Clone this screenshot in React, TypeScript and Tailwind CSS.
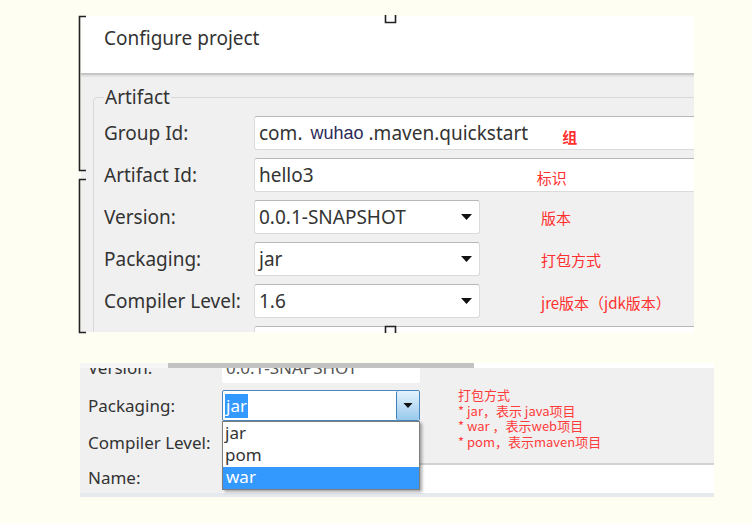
import React from 'react';

const ui = "font-['Noto_Sans','Noto_Sans_CJK_SC',sans-serif]";
const cjk = "font-['Noto_Sans_CJK_SC','Noto_Sans',sans-serif]";

const Caret = ({ w = 11, h = 6 }: { w?: number; h?: number }) => (
    <svg width={w} height={h} viewBox="0 0 11 6">
        <path d="M0 0h11L5.5 6z" fill="#111" />
    </svg>
);

const Note: React.FC<{ children: React.ReactNode; className?: string }> = ({ children, className = '' }) => (
    <span className={`${cjk} text-[15px] leading-none text-[#ff2f2f] ${className}`}>{children}</span>
);

const FormRow: React.FC<{ label: string; children: React.ReactNode }> = ({ label, children }) => (
    <div className="flex h-[34px] items-center">
        <div className="w-[150px] shrink-0 text-[19px] text-[#333]">{label}</div>
        {children}
    </div>
);

const Field: React.FC<{ children?: React.ReactNode; className?: string }> = ({ children, className = '' }) => (
    <div className={`flex h-[34px] items-center rounded-[3px] border border-[#dadada] border-t-[#b8b8b8] bg-white pl-[4px] text-[19px] text-[#333] ${className}`}>
        {children}
    </div>
);

const Select: React.FC<{ value: string }> = ({ value }) => (
    <Field className="w-[226px] shrink-0 justify-between pr-[7px]">
        <span>{value}</span>
        <Caret />
    </Field>
);

// the brackets and handles left on the page by the editor's image selection
const Handles = () => (
    <svg className="pointer-events-none absolute left-0 top-0" width="752" height="524">
        <g fill="none" stroke="#222" strokeWidth="1.6">
            <path d="M86 16.5H79.5V170.5H86" />
            <path d="M86 179.5H79.5V332.5H86" />
            <path d="M385.5 15V22.5H395.5V15" />
            <path d="M385.5 333V326.5H395.5V333" />
        </g>
    </svg>
);

const ConfigureProject = () => (
    <div className={`${ui} ml-[81px] h-[316px] w-[613px] overflow-hidden bg-[#f0f0f0]`}>
        <div className="flex h-[57px] items-start bg-white pl-[23px] pt-[8px] text-[19px] text-[#333]">Configure project</div>
        <div className="h-[2px] bg-[#c6c6c6]" />
        <div className="h-[2px] bg-[#e2e2e2]" />
        <fieldset className="ml-[12px] mt-[9px] w-[640px] rounded-[4px] border border-[#d8d8d8] pb-2 pl-[10px]">
            <legend className="px-[1px] text-[19px] leading-[22px] text-[#333]">Artifact</legend>
            <div className="mt-[8px] flex flex-col gap-[8px]">
                <FormRow label="Group Id:">
                    <Field className="flex-1">
                        <span>com.</span>
                        <span className="ml-[8px] text-[18px] text-[#2d2a5a] font-['Liberation_Sans',sans-serif]">wuhao</span>
                        <span className="ml-[5px]">.maven.quickstart</span>
                        <Note className="ml-[34px] mt-[6px] font-bold">组</Note>
                    </Field>
                </FormRow>
                <FormRow label="Artifact Id:">
                    <Field className="flex-1">
                        <span>hello3</span>
                        <Note className="ml-[223px] mt-[4px]">标识</Note>
                    </Field>
                </FormRow>
                <FormRow label="Version:">
                    <Select value="0.0.1-SNAPSHOT" />
                    <Note className="ml-[61px]">版本</Note>
                </FormRow>
                <FormRow label="Packaging:">
                    <Select value="jar" />
                    <Note className="ml-[61px]">打包方式</Note>
                </FormRow>
                <FormRow label="Compiler Level:">
                    <Select value="1.6" />
                    <Note className="ml-[61px] mt-[2px]">jre版本（jdk版本）</Note>
                </FormRow>
                <FormRow label="">
                    <Field className="flex-1 border-[#8fa9c4] border-t-[#7d9bbb]" />
                </FormRow>
            </div>
        </fieldset>
    </div>
);

const PackagingDropdown = () => (
    <div className={`${ui} ml-[80px] mt-[31px] flex h-[134px] w-[634px] flex-col overflow-hidden bg-[#f0f0f0] text-[17px] text-[#333]`}>
        <div className="flex h-[5px] shrink-0">
            <div className="w-[88px] bg-[#f6f6f6]" />
            <div className="w-[306px] bg-[#c3c3c3]" />
            <div className="flex-1 bg-white" />
        </div>
        <div className="flex h-[95px] shrink-0">
            <div className="flex w-[340px] flex-col">
                <div className="flex h-[15px] overflow-hidden">
                    <div className="-mt-[13px] w-[142px] pl-[8px] leading-[26px]">Version:</div>
                    <div className="-mt-[13px] h-[28px] w-[198px] rounded-[2px] bg-white pl-[4px] leading-[26px] text-[#555]">0.0.1-SNAPSHOT</div>
                </div>
                <div className="relative mt-[7px] flex h-[31px] items-center">
                    <div className="w-[142px] pl-[8px]">Packaging:</div>
                    <div className="flex h-[31px] w-[198px] items-stretch rounded-[2px] border border-[#4a86be] bg-white">
                        <div className="flex flex-1 items-center pl-[2px]">
                            <span className="bg-[#3399ff] px-[1px] leading-[24px] text-white">jar</span>
                        </div>
                        <div className="flex w-[23px] items-center justify-center rounded-[2px] border-l border-[#3f7fb5] bg-gradient-to-b from-[#e4f3fd] to-[#98c9ec]">
                            <Caret w={10} h={5} />
                        </div>
                    </div>
                    <div className="absolute left-[142px] top-full z-10 flex h-[69px] w-[198px] flex-col border border-[#7d7d7d] bg-white pt-[1px] shadow-[2px_2px_3px_rgba(0,0,0,0.35)]">
                        <div className="h-[22px] pl-[2px] leading-[20px]">jar</div>
                        <div className="h-[22px] pl-[2px] leading-[20px]">pom</div>
                        <div className="h-[22px] bg-[#3399ff] pl-[3px] leading-[20px] text-white">war</div>
                    </div>
                </div>
                <div className="mt-[5px] flex h-[34px] items-center">
                    <div className="w-[142px] pl-[8px]">Compiler Level:</div>
                </div>
            </div>
            <div className={`${cjk} flex flex-col gap-[0.5px] pl-[38px] pt-[19px] text-[13px] leading-[15px] text-[#ff3b3b]`}>
                <span>打包方式</span>
                <span>* jar，表示 java项目</span>
                <span>* war ，表示web项目</span>
                <span>* pom，表示maven项目</span>
            </div>
        </div>
        <div className="flex h-[30px] shrink-0">
            <div className="flex w-[142px] items-center pl-[8px]">Name:</div>
            <div className="flex-1 border-t-2 border-[#d2d2d2] bg-white" />
        </div>
        <div className="h-[4px] shrink-0 bg-[#e6eaee]" />
    </div>
);

export default function App() {
    return (
        <div className="relative h-[524px] w-full overflow-hidden bg-[#fffef2] pt-[16px]">
            <ConfigureProject />
            <PackagingDropdown />
            <Handles />
        </div>
    );
}
